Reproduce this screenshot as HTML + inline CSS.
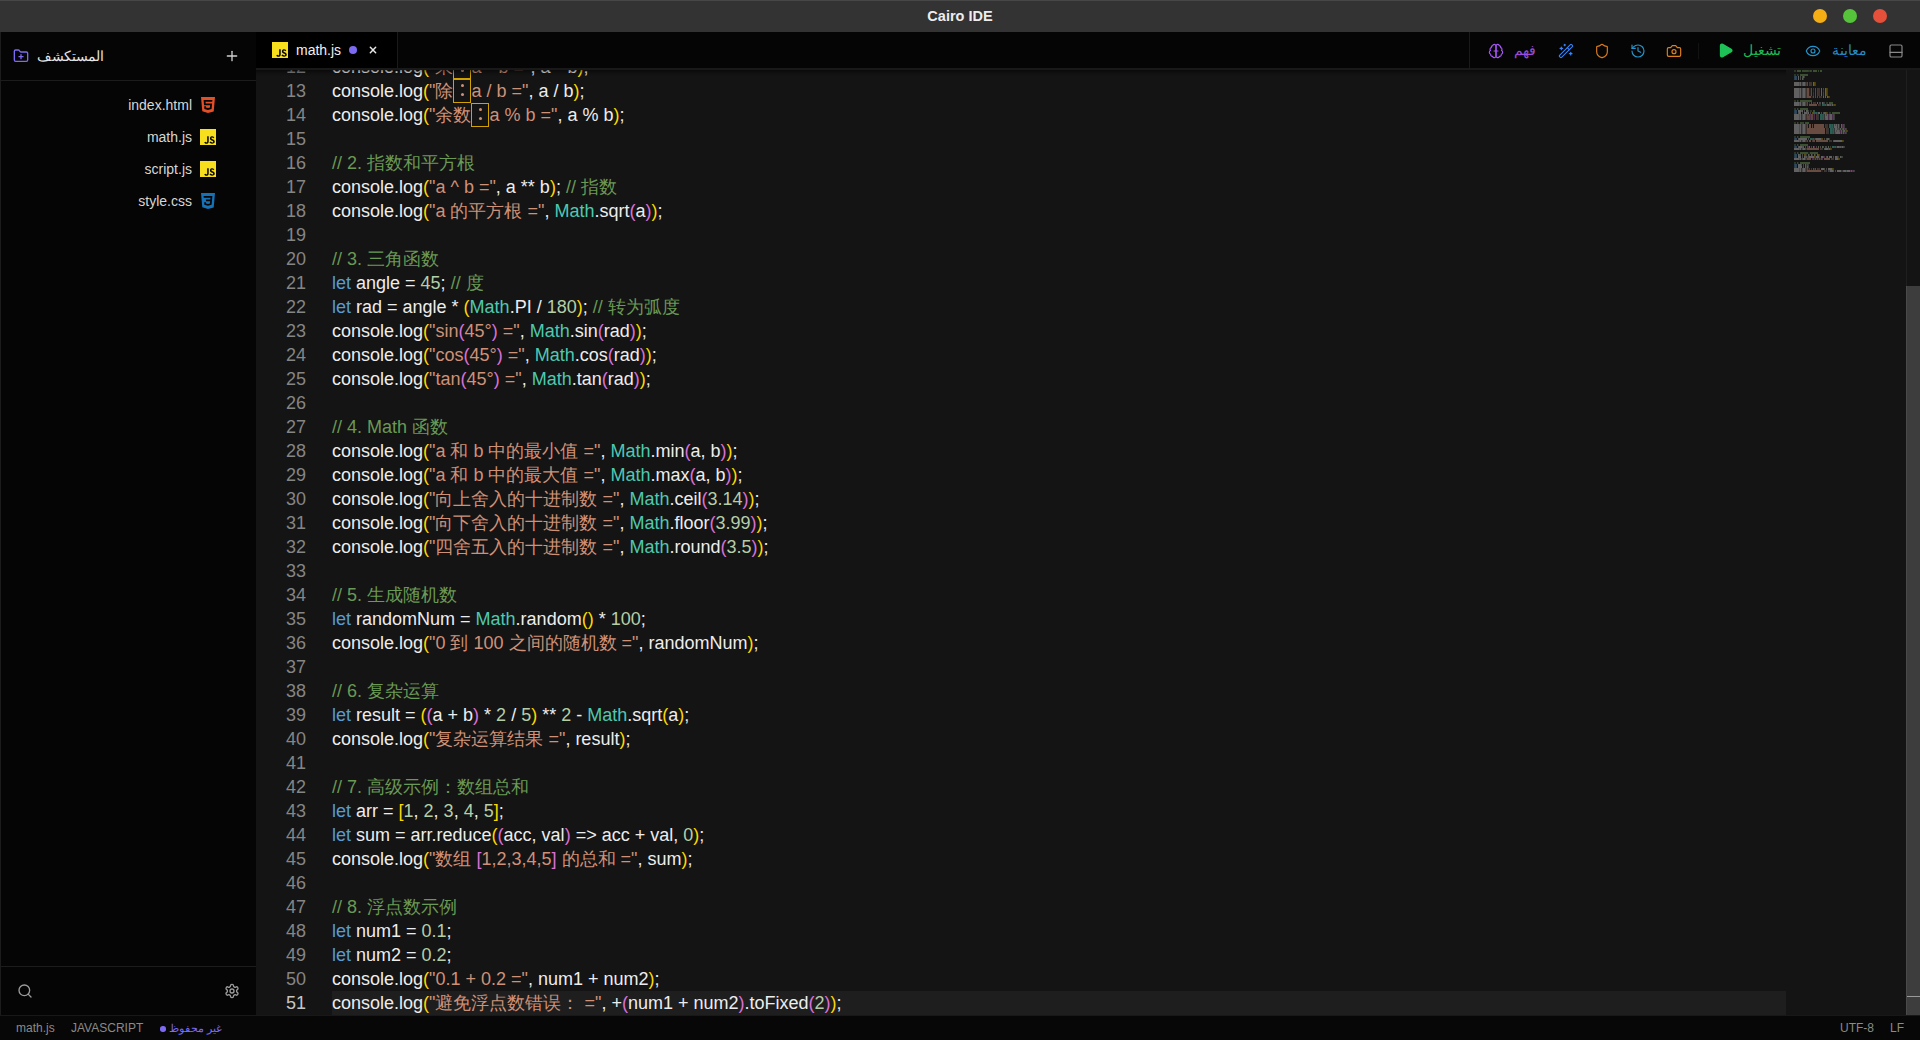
<!DOCTYPE html>
<html><head><meta charset="utf-8">
<style>
*{margin:0;padding:0;box-sizing:border-box}
html,body{width:1920px;height:1040px;overflow:hidden;background:#050505;font-family:"Liberation Sans",sans-serif}
.abs{position:absolute}
svg.i{position:absolute;width:16px;height:16px;fill:none;stroke-width:2;stroke-linecap:round;stroke-linejoin:round}
#title{left:0;top:0;width:1920px;height:32px;background:#333333;border-top:1px solid #474747}
#title .t{position:absolute;left:0;width:1920px;top:6px;text-align:center;color:#ededed;font-weight:bold;font-size:14.5px;line-height:18px}
.dot{position:absolute;top:8px;width:14px;height:14px;border-radius:50%}
#side{left:0;top:32px;width:256px;height:983px;background:#050505}
#sideborder{left:0;top:32px;width:1px;height:983px;background:#1c1c1c}
#sidehead{left:1px;top:0;width:255px;height:49px;border-bottom:1px solid #1c1c1c}
.file{position:absolute;right:64px;height:32px;line-height:32px;font-size:14px;color:#d6d6d6;text-align:right;white-space:nowrap}
#sidefoot{left:1px;top:934px;width:255px;height:49px;border-top:1px solid #1c1c1c}
#tabs{left:256px;top:32px;width:1664px;height:38px;background:#050505;border-bottom:2px solid #1a1919}
#tab{left:0;top:0;width:142px;height:36px;background:#000;border-right:1px solid #1a1a1a}
#toolbar{left:1213px;top:0;width:451px;height:36px;border-left:1px solid #1a1a1a;background:#050505}
.tb{position:absolute;font-size:14px;line-height:20px;white-space:nowrap}
#editor{left:256px;top:70px;width:1664px;height:945px;background:#141414;overflow:hidden}
#shadow{left:0;top:0;width:1530px;height:6px;box-shadow:inset 0 6px 6px -6px #000}
#code{position:absolute;left:0;top:-15px;width:1650px}
#curline{left:76px;top:921px;width:1454px;height:24px;background:#1e1e1e}
.ln{position:relative;height:24px;line-height:24px;font-size:18px;white-space:pre;color:#ededed}
.ln .n{position:absolute;left:0;width:50px;text-align:right;color:#858585}
.ln.cur .n{color:#c6c6c6}
.ln .c{position:absolute;left:76px}
.s{color:#ce9178}.cm{color:#6a9955}.k{color:#569cd6}.m{color:#4ec9b0}.nu{color:#b5cea8}
.p1{color:#ffd700}.p2{color:#da70d6}.p3{color:#179fff}
.box{position:relative;color:transparent}
.box::before{content:"";position:absolute;left:8px;top:3px;width:3px;height:3px;border-radius:50%;background:#ce9178;box-shadow:0 9px 0 #ce9178}
.box::after{content:"";position:absolute;left:0;right:0;top:-2px;bottom:-2px;border:1px solid #d1a100}
#vscroll{left:1650px;top:0;width:14px;height:945px;border-left:1px solid #1f1f1f}
#thumb{left:1650px;top:216px;width:14px;height:729px;background:#3d3d3d;border-left:1px solid #4a4a4a}
#cursorind{left:1651px;top:926px;width:13px;height:1px;background:#9a9a9a}
#status{left:0;top:1015px;width:1920px;height:25px;background:#070707;border-top:1px solid #181818;font-size:12px;color:#8a8a8a}
#status span{position:absolute;top:5px;line-height:14px;white-space:nowrap}
</style></head><body>
<div id="title" class="abs"><div class="t">Cairo IDE</div>
<div class="dot" style="left:1813px;background:#f5ae14"></div>
<div class="dot" style="left:1843px;background:#55c43b"></div>
<div class="dot" style="left:1873px;background:#e5503b"></div>
</div>

<div id="side" class="abs">
 <div id="sideborder" class="abs" style="top:0"></div>
 <div id="sidehead" class="abs"></div>
 <svg class="i" viewBox="0 0 24 24" style="left:13px;top:16px;stroke:#7c6af2"><path d="M12 10v6"/><path d="M9 13h6"/><path d="M20 20a2 2 0 0 0 2-2V8a2 2 0 0 0-2-2h-7.9a2 2 0 0 1-1.69-.9L9.6 3.9A2 2 0 0 0 7.930 3H4a2 2 0 0 0-2 2v13a2 2 0 0 0 2 2Z"/></svg>
 <div class="abs" style="left:37px;top:14px;font-size:14px;line-height:20px;color:#e6e6e6;white-space:nowrap">المستكشف</div>
 <svg class="i" viewBox="0 0 24 24" style="left:224px;top:16px;stroke:#d0d0d0"><path d="M5 12h14"/><path d="M12 5v14"/></svg>
 <div class="file" style="top:57px">index.html</div>
 <div class="file" style="top:89px">math.js</div>
 <div class="file" style="top:121px">script.js</div>
 <div class="file" style="top:153px">style.css</div>
 <svg class="abs" width="16" height="16" viewBox="0 0 24 24" style="left:200px;top:65px"><path fill-rule="evenodd" d="M1.5 0h21l-1.91 21.563L11.977 24l-8.564-2.438L1.5 0zm7.031 9.75l-.232-2.718 10.059.003.23-2.622L5.412 4.41l.698 8.01h9.126l-.326 3.426-2.91.804-2.955-.81-.188-2.11H6.248l.33 4.171L12 19.351l5.379-1.443.744-8.157H8.531z" fill="#e34f26"/></svg>
 <svg class="abs" width="16" height="16" viewBox="0 0 24 24" style="left:200px;top:97px"><path fill-rule="evenodd" d="M0 0h24v24H0V0zm22.034 18.276c-.175-1.095-.888-2.015-3.003-2.873-.736-.345-1.554-.585-1.797-1.14-.091-.33-.105-.51-.046-.705.15-.646.915-.84 1.515-.66.39.12.75.42.976.9 1.034-.676 1.034-.676 1.755-1.125-.27-.42-.404-.601-.586-.78-.63-.705-1.469-1.065-2.834-1.034l-.705.089c-.676.165-1.32.525-1.71 1.005-1.14 1.291-.811 3.541.569 4.471 1.365 1.02 3.361 1.244 3.616 2.205.24 1.17-.87 1.545-1.966 1.41-.811-.18-1.26-.586-1.755-1.336l-1.83 1.051c.21.48.45.689.81 1.109 1.74 1.756 6.09 1.666 6.871-1.004.029-.09.24-.705.074-1.65l.046.067zm-8.983-7.245h-2.248c0 1.938-.009 3.864-.009 5.805 0 1.232.063 2.363-.138 2.711-.33.689-1.18.601-1.566.48-.396-.196-.597-.466-.83-.855-.063-.105-.11-.196-.127-.196l-1.825 1.125c.305.63.75 1.172 1.324 1.517.855.51 2.004.675 3.207.405.783-.226 1.458-.691 1.811-1.411.51-.93.402-2.07.397-3.346.012-2.054 0-4.109 0-6.179l.004-.056z" fill="#f7df1e"/></svg>
 <svg class="abs" width="16" height="16" viewBox="0 0 24 24" style="left:200px;top:129px"><path fill-rule="evenodd" d="M0 0h24v24H0V0zm22.034 18.276c-.175-1.095-.888-2.015-3.003-2.873-.736-.345-1.554-.585-1.797-1.14-.091-.33-.105-.51-.046-.705.15-.646.915-.84 1.515-.66.39.12.75.42.976.9 1.034-.676 1.034-.676 1.755-1.125-.27-.42-.404-.601-.586-.78-.63-.705-1.469-1.065-2.834-1.034l-.705.089c-.676.165-1.32.525-1.71 1.005-1.14 1.291-.811 3.541.569 4.471 1.365 1.02 3.361 1.244 3.616 2.205.24 1.17-.87 1.545-1.966 1.41-.811-.18-1.26-.586-1.755-1.336l-1.83 1.051c.21.48.45.689.81 1.109 1.74 1.756 6.09 1.666 6.871-1.004.029-.09.24-.705.074-1.65l.046.067zm-8.983-7.245h-2.248c0 1.938-.009 3.864-.009 5.805 0 1.232.063 2.363-.138 2.711-.33.689-1.18.601-1.566.48-.396-.196-.597-.466-.83-.855-.063-.105-.11-.196-.127-.196l-1.825 1.125c.305.63.75 1.172 1.324 1.517.855.51 2.004.675 3.207.405.783-.226 1.458-.691 1.811-1.411.51-.93.402-2.07.397-3.346.012-2.054 0-4.109 0-6.179l.004-.056z" fill="#f7df1e"/></svg>
 <svg class="abs" width="16" height="16" viewBox="0 0 24 24" style="left:200px;top:161px"><path fill-rule="evenodd" d="M1.5 0h21l-1.91 21.563L11.977 24l-8.565-2.438L1.5 0zm17.09 4.413L5.41 4.41l.213 2.622 10.125.002-.255 2.716h-6.64l.24 2.573h6.182l-.366 3.523-2.91.804-2.956-.81-.188-2.11h-2.61l.29 3.855L12 19.288l5.373-1.53L18.59 4.414z" fill="#1572b6"/></svg>
 <div id="sidefoot" class="abs"></div>
 <svg class="i" viewBox="0 0 24 24" style="left:17px;top:951px;stroke:#9c9c9c"><circle cx="11" cy="11" r="8"/><path d="m21 21-4.3-4.3"/></svg>
 <svg class="i" viewBox="0 0 24 24" style="left:224px;top:951px;stroke:#9c9c9c"><path d="M12.22 2h-.44a2 2 0 0 0-2 2v.18a2 2 0 0 1-1 1.730l-.43.25a2 2 0 0 1-2 0l-.15-.08a2 2 0 0 0-2.73.73l-.22.38a2 2 0 0 0 .73 2.73l.15.1a2 2 0 0 1 1 1.72v.51a2 2 0 0 1-1 1.74l-.15.09a2 2 0 0 0-.73 2.73l.22.38a2 2 0 0 0 2.73.73l.15-.08a2 2 0 0 1 2 0l.43.25a2 2 0 0 1 1 1.73V20a2 2 0 0 0 2 2h.44a2 2 0 0 0 2-2v-.18a2 2 0 0 1 1-1.73l.43-.25a2 2 0 0 1 2 0l.15.08a2 2 0 0 0 2.73-.73l.22-.39a2 2 0 0 0-.73-2.73l-.15-.08a2 2 0 0 1-1-1.74v-.5a2 2 0 0 1 1-1.74l.15-.09a2 2 0 0 0 .73-2.73l-.22-.38a2 2 0 0 0-2.73-.73l-.15.08a2 2 0 0 1-2 0l-.43-.25a2 2 0 0 1-1-1.73V4a2 2 0 0 0-2-2z"/><circle cx="12" cy="12" r="3"/></svg>
</div>

<div id="tabs" class="abs">
 <div id="tab" class="abs">
  <svg class="abs" width="16" height="16" viewBox="0 0 24 24" style="left:16px;top:10px"><path fill-rule="evenodd" d="M0 0h24v24H0V0zm22.034 18.276c-.175-1.095-.888-2.015-3.003-2.873-.736-.345-1.554-.585-1.797-1.14-.091-.33-.105-.51-.046-.705.15-.646.915-.84 1.515-.66.39.12.75.42.976.9 1.034-.676 1.034-.676 1.755-1.125-.27-.42-.404-.601-.586-.78-.63-.705-1.469-1.065-2.834-1.034l-.705.089c-.676.165-1.32.525-1.71 1.005-1.14 1.291-.811 3.541.569 4.471 1.365 1.02 3.361 1.244 3.616 2.205.24 1.17-.87 1.545-1.966 1.41-.811-.18-1.26-.586-1.755-1.336l-1.83 1.051c.21.48.45.689.81 1.109 1.74 1.756 6.09 1.666 6.871-1.004.029-.09.24-.705.074-1.65l.046.067zm-8.983-7.245h-2.248c0 1.938-.009 3.864-.009 5.805 0 1.232.063 2.363-.138 2.711-.33.689-1.18.601-1.566.48-.396-.196-.597-.466-.83-.855-.063-.105-.11-.196-.127-.196l-1.825 1.125c.305.63.75 1.172 1.324 1.517.855.51 2.004.675 3.207.405.783-.226 1.458-.691 1.811-1.411.51-.93.402-2.07.397-3.346.012-2.054 0-4.109 0-6.179l.004-.056z" fill="#f7df1e"/></svg>
  <div class="tb" style="left:40px;top:8px;color:#f0f0f0">math.js</div>
  <div class="abs" style="left:93px;top:14px;width:8px;height:8px;border-radius:50%;background:#7c6af2"></div>
  <svg class="i" viewBox="0 0 24 24" style="left:109px;top:10px;stroke:#e8e8e8;stroke-width:2.2"><path d="M16 8l-8 8"/><path d="m8 8 8 8"/></svg>
 </div>
 <div id="toolbar" class="abs">
  <svg class="i" viewBox="0 0 24 24" style="left:18px;top:11px;stroke:#a855f7;stroke-width:1.75"><path d="M9.5 2A2.5 2.5 0 0 1 12 4.5v15a2.5 2.5 0 0 1-4.96.44 2.5 2.5 0 0 1-2.96-3.08 3 3 0 0 1-.34-5.58 2.5 2.5 0 0 1 1.32-4.24 2.5 2.5 0 0 1 1.98-3A2.5 2.5 0 0 1 9.5 2Z"/><path d="M14.5 2A2.5 2.5 0 0 0 12 4.5v15a2.5 2.5 0 0 0 4.96.44 2.5 2.5 0 0 0 2.96-3.08 3 3 0 0 0 .34-5.58 2.5 2.5 0 0 0-1.32-4.24 2.5 2.5 0 0 0-1.98-3A2.5 2.5 0 0 0 14.5 2Z"/><path d="M9 12h6"/></svg>
  <div class="tb" style="left:44px;top:8px;color:#9a4be0">فهم</div>
  <svg class="i" viewBox="0 0 24 24" style="left:88px;top:11px;stroke:#3b82f6;stroke-width:1.75"><path d="m21.64 3.64-1.28-1.28a1.21 1.21 0 0 0-1.72 0L2.360 18.64a1.21 1.21 0 0 0 0 1.720l1.28 1.28a1.2 1.2 0 0 0 1.72 0L21.64 5.36a1.2 1.2 0 0 0 0-1.72"/><path d="m14 7 3 3"/><path d="M5 6v4"/><path d="M19 14v4"/><path d="M10 2v2"/><path d="M7 8H3"/><path d="M21 16h-4"/><path d="M11 3H9"/></svg>
  <svg class="i" viewBox="0 0 24 24" style="left:124px;top:11px;stroke:#d97b1e;stroke-width:1.75"><path d="M20 13c0 5-3.5 7.5-7.66 8.95a1 1 0 0 1-.67-.01C7.5 20.5 4 18 4 13V6a1 1 0 0 1 1-1c2 0 4.5-1.2 6.24-2.72a1.17 1.17 0 0 1 1.52 0C14.51 3.81 17 5 19 5a1 1 0 0 1 1 1z"/></svg>
  <svg class="i" viewBox="0 0 24 24" style="left:160px;top:11px;stroke:#2394cc;stroke-width:1.75"><path d="M3 12a9 9 0 1 0 9-9 9.75 9.75 0 0 0-6.74 2.74L3 8"/><path d="M3 3v5h5"/><path d="M12 7v5l4 2"/></svg>
  <svg class="i" viewBox="0 0 24 24" style="left:196px;top:11px;stroke:#de801c;stroke-width:1.75"><path d="M14.5 4h-5L7 7H4a2 2 0 0 0-2 2v9a2 2 0 0 0 2 2h16a2 2 0 0 0 2-2V9a2 2 0 0 0-2-2h-3l-2.5-3z"/><circle cx="12" cy="13" r="3"/></svg>
  <div class="abs" style="left:228px;top:11px;width:1px;height:16px;background:#121212"></div>
  <svg class="i" viewBox="0 0 24 24" style="left:247px;top:10px;width:17px;height:17px;stroke:#1ec257;fill:#1ec257"><path d="M5 5a2 2 0 0 1 3.008-1.728l11.997 6.998a2 2 0 0 1 .003 3.458l-12 7A2 2 0 0 1 5 19z"/></svg>
  <div class="tb" style="left:273px;top:8px;color:#1db852">تشغيل</div>
  <svg class="i" viewBox="0 0 24 24" style="left:335px;top:11px;stroke:#2394cc;stroke-width:1.75"><path d="M2.062 12.348a1 1 0 0 1 0-.696 10.75 10.75 0 0 1 19.876 0 1 1 0 0 1 0 .696 10.750 10.75 0 0 1-19.876 0"/><circle cx="12" cy="12" r="3"/></svg>
  <div class="tb" style="left:362px;top:8px;color:#2689c2">معاينة</div>
  <svg class="i" viewBox="0 0 24 24" style="left:418px;top:11px;stroke:#8a8a8a;stroke-width:1.75"><rect width="18" height="18" x="3" y="3" rx="2"/><path d="M3 14h18"/></svg>
 </div>
</div>

<div id="editor" class="abs">
<div id="curline" class="abs"></div>
<div id="code">
<div class="ln"><span class="n">12</span><span class="c">console.log<span class="p1">(</span><span class="s">&quot;乘</span><span class="s box">：</span><span class="s">a * b =&quot;</span>, a * b<span class="p1">)</span>;</span></div>
<div class="ln"><span class="n">13</span><span class="c">console.log<span class="p1">(</span><span class="s">&quot;除</span><span class="s box">：</span><span class="s">a / b =&quot;</span>, a / b<span class="p1">)</span>;</span></div>
<div class="ln"><span class="n">14</span><span class="c">console.log<span class="p1">(</span><span class="s">&quot;余数</span><span class="s box">：</span><span class="s">a % b =&quot;</span>, a % b<span class="p1">)</span>;</span></div>
<div class="ln"><span class="n">15</span><span class="c"></span></div>
<div class="ln"><span class="n">16</span><span class="c"><span class="cm">// 2. 指数和平方根</span></span></div>
<div class="ln"><span class="n">17</span><span class="c">console.log<span class="p1">(</span><span class="s">&quot;a ^ b =&quot;</span>, a ** b<span class="p1">)</span>; <span class="cm">// 指数</span></span></div>
<div class="ln"><span class="n">18</span><span class="c">console.log<span class="p1">(</span><span class="s">&quot;a 的平方根 =&quot;</span>, <span class="m">Math</span>.sqrt<span class="p2">(</span>a<span class="p2">)</span><span class="p1">)</span>;</span></div>
<div class="ln"><span class="n">19</span><span class="c"></span></div>
<div class="ln"><span class="n">20</span><span class="c"><span class="cm">// 3. 三角函数</span></span></div>
<div class="ln"><span class="n">21</span><span class="c"><span class="k">let</span> angle = <span class="nu">45</span>; <span class="cm">// 度</span></span></div>
<div class="ln"><span class="n">22</span><span class="c"><span class="k">let</span> rad = angle * <span class="p1">(</span><span class="m">Math</span>.PI / <span class="nu">180</span><span class="p1">)</span>; <span class="cm">// 转为弧度</span></span></div>
<div class="ln"><span class="n">23</span><span class="c">console.log<span class="p1">(</span><span class="s">&quot;sin</span><span class="p2">(</span><span class="s">45°</span><span class="p2">)</span><span class="s"> =&quot;</span>, <span class="m">Math</span>.sin<span class="p2">(</span>rad<span class="p2">)</span><span class="p1">)</span>;</span></div>
<div class="ln"><span class="n">24</span><span class="c">console.log<span class="p1">(</span><span class="s">&quot;cos</span><span class="p2">(</span><span class="s">45°</span><span class="p2">)</span><span class="s"> =&quot;</span>, <span class="m">Math</span>.cos<span class="p2">(</span>rad<span class="p2">)</span><span class="p1">)</span>;</span></div>
<div class="ln"><span class="n">25</span><span class="c">console.log<span class="p1">(</span><span class="s">&quot;tan</span><span class="p2">(</span><span class="s">45°</span><span class="p2">)</span><span class="s"> =&quot;</span>, <span class="m">Math</span>.tan<span class="p2">(</span>rad<span class="p2">)</span><span class="p1">)</span>;</span></div>
<div class="ln"><span class="n">26</span><span class="c"></span></div>
<div class="ln"><span class="n">27</span><span class="c"><span class="cm">// 4. Math 函数</span></span></div>
<div class="ln"><span class="n">28</span><span class="c">console.log<span class="p1">(</span><span class="s">&quot;a 和 b 中的最小值 =&quot;</span>, <span class="m">Math</span>.min<span class="p2">(</span>a, b<span class="p2">)</span><span class="p1">)</span>;</span></div>
<div class="ln"><span class="n">29</span><span class="c">console.log<span class="p1">(</span><span class="s">&quot;a 和 b 中的最大值 =&quot;</span>, <span class="m">Math</span>.max<span class="p2">(</span>a, b<span class="p2">)</span><span class="p1">)</span>;</span></div>
<div class="ln"><span class="n">30</span><span class="c">console.log<span class="p1">(</span><span class="s">&quot;向上舍入的十进制数 =&quot;</span>, <span class="m">Math</span>.ceil<span class="p2">(</span><span class="nu">3.14</span><span class="p2">)</span><span class="p1">)</span>;</span></div>
<div class="ln"><span class="n">31</span><span class="c">console.log<span class="p1">(</span><span class="s">&quot;向下舍入的十进制数 =&quot;</span>, <span class="m">Math</span>.floor<span class="p2">(</span><span class="nu">3.99</span><span class="p2">)</span><span class="p1">)</span>;</span></div>
<div class="ln"><span class="n">32</span><span class="c">console.log<span class="p1">(</span><span class="s">&quot;四舍五入的十进制数 =&quot;</span>, <span class="m">Math</span>.round<span class="p2">(</span><span class="nu">3.5</span><span class="p2">)</span><span class="p1">)</span>;</span></div>
<div class="ln"><span class="n">33</span><span class="c"></span></div>
<div class="ln"><span class="n">34</span><span class="c"><span class="cm">// 5. 生成随机数</span></span></div>
<div class="ln"><span class="n">35</span><span class="c"><span class="k">let</span> randomNum = <span class="m">Math</span>.random<span class="p1">()</span> * <span class="nu">100</span>;</span></div>
<div class="ln"><span class="n">36</span><span class="c">console.log<span class="p1">(</span><span class="s">&quot;0 到 100 之间的随机数 =&quot;</span>, randomNum<span class="p1">)</span>;</span></div>
<div class="ln"><span class="n">37</span><span class="c"></span></div>
<div class="ln"><span class="n">38</span><span class="c"><span class="cm">// 6. 复杂运算</span></span></div>
<div class="ln"><span class="n">39</span><span class="c"><span class="k">let</span> result = <span class="p1">(</span><span class="p2">(</span>a + b<span class="p2">)</span> * <span class="nu">2</span> / <span class="nu">5</span><span class="p1">)</span> ** <span class="nu">2</span> - <span class="m">Math</span>.sqrt<span class="p1">(</span>a<span class="p1">)</span>;</span></div>
<div class="ln"><span class="n">40</span><span class="c">console.log<span class="p1">(</span><span class="s">&quot;复杂运算结果 =&quot;</span>, result<span class="p1">)</span>;</span></div>
<div class="ln"><span class="n">41</span><span class="c"></span></div>
<div class="ln"><span class="n">42</span><span class="c"><span class="cm">// 7. 高级示例：数组总和</span></span></div>
<div class="ln"><span class="n">43</span><span class="c"><span class="k">let</span> arr = <span class="p1">[</span><span class="nu">1</span>, <span class="nu">2</span>, <span class="nu">3</span>, <span class="nu">4</span>, <span class="nu">5</span><span class="p1">]</span>;</span></div>
<div class="ln"><span class="n">44</span><span class="c"><span class="k">let</span> sum = arr.reduce<span class="p1">(</span><span class="p2">(</span>acc, val<span class="p2">)</span> =&gt; acc + val, <span class="nu">0</span><span class="p1">)</span>;</span></div>
<div class="ln"><span class="n">45</span><span class="c">console.log<span class="p1">(</span><span class="s">&quot;数组 </span><span class="p2">[</span><span class="s">1,2,3,4,5</span><span class="p2">]</span><span class="s"> 的总和 =&quot;</span>, sum<span class="p1">)</span>;</span></div>
<div class="ln"><span class="n">46</span><span class="c"></span></div>
<div class="ln"><span class="n">47</span><span class="c"><span class="cm">// 8. 浮点数示例</span></span></div>
<div class="ln"><span class="n">48</span><span class="c"><span class="k">let</span> num1 = <span class="nu">0.1</span>;</span></div>
<div class="ln"><span class="n">49</span><span class="c"><span class="k">let</span> num2 = <span class="nu">0.2</span>;</span></div>
<div class="ln"><span class="n">50</span><span class="c">console.log<span class="p1">(</span><span class="s">&quot;0.1 + 0.2 =&quot;</span>, num1 + num2<span class="p1">)</span>;</span></div>
<div class="ln cur"><span class="n">51</span><span class="c">console.log<span class="p1">(</span><span class="s">&quot;避免浮点数错误： =&quot;</span>, +<span class="p2">(</span>num1 + num2<span class="p2">)</span>.toFixed<span class="p2">(</span><span class="nu">2</span><span class="p2">)</span><span class="p1">)</span>;</span></div>
</div>
<div id="shadow" class="abs"></div>
<svg class="abs" style="left:1538px;top:0px;opacity:.5" width="100" height="110" viewBox="0 0 100 110"><path fill="#6a9955" fill-opacity="0.55" d="M0 0h1v2h-1zM1 0h1v2h-1zM15 0h1v2h-1zM0 4h1v2h-1zM1 4h1v2h-1zM0 30h1v2h-1zM1 30h1v2h-1zM32 32h1v2h-1zM33 32h1v2h-1zM0 38h1v2h-1zM1 38h1v2h-1zM16 40h1v2h-1zM17 40h1v2h-1zM35 42h1v2h-1zM36 42h1v2h-1zM0 52h1v2h-1zM1 52h1v2h-1zM0 66h1v2h-1zM1 66h1v2h-1zM0 74h1v2h-1zM1 74h1v2h-1zM0 82h1v2h-1zM1 82h1v2h-1zM0 92h1v2h-1zM1 92h1v2h-1z"/><path fill="#6a9955" fill-opacity="0.9" d="M3 0h2v2h-2zM5 0h2v2h-2zM19 0h2v2h-2zM21 0h2v2h-2zM26 0h2v2h-2zM6 4h2v2h-2zM8 4h2v2h-2zM10 4h2v2h-2zM12 4h2v2h-2zM6 30h2v2h-2zM8 30h2v2h-2zM10 30h2v2h-2zM12 30h2v2h-2zM14 30h2v2h-2zM16 30h2v2h-2zM35 32h2v2h-2zM37 32h2v2h-2zM6 38h2v2h-2zM8 38h2v2h-2zM10 38h2v2h-2zM12 38h2v2h-2zM19 40h2v2h-2zM38 42h2v2h-2zM40 42h2v2h-2zM42 42h2v2h-2zM44 42h2v2h-2zM11 52h2v2h-2zM13 52h2v2h-2zM6 66h2v2h-2zM8 66h2v2h-2zM10 66h2v2h-2zM12 66h2v2h-2zM14 66h2v2h-2zM6 74h2v2h-2zM8 74h2v2h-2zM10 74h2v2h-2zM12 74h2v2h-2zM6 82h2v2h-2zM8 82h2v2h-2zM10 82h2v2h-2zM12 82h2v2h-2zM16 82h2v2h-2zM18 82h2v2h-2zM20 82h2v2h-2zM22 82h2v2h-2zM6 92h2v2h-2zM8 92h2v2h-2zM10 92h2v2h-2zM12 92h2v2h-2zM14 92h2v2h-2z"/><path fill="#6a9955" fill-opacity="0.8" d="M8 0h1v2h-1zM9 0h1v2h-1zM10 0h1v2h-1zM11 0h1v2h-1zM12 0h1v2h-1zM13 0h1v2h-1zM16 0h1v2h-1zM24 0h1v2h-1zM3 30h1v2h-1zM3 38h1v2h-1zM3 52h1v2h-1zM6 52h1v2h-1zM7 52h1v2h-1zM9 52h1v2h-1zM3 66h1v2h-1zM3 74h1v2h-1zM3 82h1v2h-1zM3 92h1v2h-1z"/><path fill="#6a9955" fill-opacity="0.65" d="M14 0h1v2h-1z"/><path fill="#6a9955" fill-opacity="0.7" d="M17 0h1v2h-1zM8 52h1v2h-1z"/><path fill="#6a9955" fill-opacity="0.6" d="M3 4h1v2h-1z"/><path fill="#6a9955" fill-opacity="0.35" d="M4 4h1v2h-1zM4 30h1v2h-1zM4 38h1v2h-1zM4 52h1v2h-1zM4 66h1v2h-1zM4 74h1v2h-1zM4 82h1v2h-1zM4 92h1v2h-1z"/><path fill="#569cd6" fill-opacity="0.6" d="M0 6h1v2h-1zM0 8h1v2h-1zM0 40h1v2h-1zM0 42h1v2h-1zM0 68h1v2h-1zM0 76h1v2h-1zM0 84h1v2h-1zM0 86h1v2h-1zM0 94h1v2h-1zM0 96h1v2h-1z"/><path fill="#569cd6" fill-opacity="0.8" d="M1 6h1v2h-1zM1 8h1v2h-1zM1 40h1v2h-1zM1 42h1v2h-1zM1 68h1v2h-1zM1 76h1v2h-1zM1 84h1v2h-1zM1 86h1v2h-1zM1 94h1v2h-1zM1 96h1v2h-1z"/><path fill="#569cd6" fill-opacity="0.7" d="M2 6h1v2h-1zM2 8h1v2h-1zM2 40h1v2h-1zM2 42h1v2h-1zM2 68h1v2h-1zM2 76h1v2h-1zM2 84h1v2h-1zM2 86h1v2h-1zM2 94h1v2h-1zM2 96h1v2h-1z"/><path fill="#d4d4d4" fill-opacity="0.8" d="M4 6h1v2h-1zM4 8h1v2h-1zM0 12h1v2h-1zM1 12h1v2h-1zM2 12h1v2h-1zM3 12h1v2h-1zM4 12h1v2h-1zM6 12h1v2h-1zM9 12h1v2h-1zM10 12h1v2h-1zM19 12h1v2h-1zM0 14h1v2h-1zM1 14h1v2h-1zM2 14h1v2h-1zM3 14h1v2h-1zM4 14h1v2h-1zM6 14h1v2h-1zM9 14h1v2h-1zM10 14h1v2h-1zM19 14h1v2h-1zM0 18h1v2h-1zM1 18h1v2h-1zM2 18h1v2h-1zM3 18h1v2h-1zM4 18h1v2h-1zM6 18h1v2h-1zM9 18h1v2h-1zM10 18h1v2h-1zM27 18h1v2h-1zM31 18h1v2h-1zM0 20h1v2h-1zM1 20h1v2h-1zM2 20h1v2h-1zM3 20h1v2h-1zM4 20h1v2h-1zM6 20h1v2h-1zM9 20h1v2h-1zM10 20h1v2h-1zM27 20h1v2h-1zM31 20h1v2h-1zM0 22h1v2h-1zM1 22h1v2h-1zM2 22h1v2h-1zM3 22h1v2h-1zM4 22h1v2h-1zM6 22h1v2h-1zM9 22h1v2h-1zM10 22h1v2h-1zM27 22h1v2h-1zM31 22h1v2h-1zM0 24h1v2h-1zM1 24h1v2h-1zM2 24h1v2h-1zM3 24h1v2h-1zM4 24h1v2h-1zM6 24h1v2h-1zM9 24h1v2h-1zM10 24h1v2h-1zM27 24h1v2h-1zM31 24h1v2h-1zM0 26h1v2h-1zM1 26h1v2h-1zM2 26h1v2h-1zM3 26h1v2h-1zM4 26h1v2h-1zM6 26h1v2h-1zM9 26h1v2h-1zM10 26h1v2h-1zM29 26h1v2h-1zM31 26h1v2h-1zM33 26h1v2h-1zM0 32h1v2h-1zM1 32h1v2h-1zM2 32h1v2h-1zM3 32h1v2h-1zM4 32h1v2h-1zM6 32h1v2h-1zM9 32h1v2h-1zM10 32h1v2h-1zM23 32h1v2h-1zM28 32h1v2h-1zM0 34h1v2h-1zM1 34h1v2h-1zM2 34h1v2h-1zM3 34h1v2h-1zM4 34h1v2h-1zM6 34h1v2h-1zM9 34h1v2h-1zM10 34h1v2h-1zM33 34h1v2h-1zM34 34h1v2h-1zM38 34h1v2h-1zM4 40h1v2h-1zM5 40h1v2h-1zM6 40h1v2h-1zM8 40h1v2h-1zM5 42h1v2h-1zM6 42h1v2h-1zM10 42h1v2h-1zM11 42h1v2h-1zM12 42h1v2h-1zM14 42h1v2h-1zM24 42h1v2h-1zM25 42h1v2h-1zM0 44h1v2h-1zM1 44h1v2h-1zM2 44h1v2h-1zM3 44h1v2h-1zM4 44h1v2h-1zM6 44h1v2h-1zM9 44h1v2h-1zM10 44h1v2h-1zM31 44h1v2h-1zM33 44h1v2h-1zM36 44h1v2h-1zM37 44h1v2h-1zM0 46h1v2h-1zM1 46h1v2h-1zM2 46h1v2h-1zM3 46h1v2h-1zM4 46h1v2h-1zM6 46h1v2h-1zM9 46h1v2h-1zM10 46h1v2h-1zM31 46h1v2h-1zM32 46h1v2h-1zM33 46h1v2h-1zM36 46h1v2h-1zM37 46h1v2h-1zM0 48h1v2h-1zM1 48h1v2h-1zM2 48h1v2h-1zM3 48h1v2h-1zM4 48h1v2h-1zM6 48h1v2h-1zM9 48h1v2h-1zM10 48h1v2h-1zM32 48h1v2h-1zM33 48h1v2h-1zM36 48h1v2h-1zM37 48h1v2h-1zM0 54h1v2h-1zM1 54h1v2h-1zM2 54h1v2h-1zM3 54h1v2h-1zM4 54h1v2h-1zM6 54h1v2h-1zM9 54h1v2h-1zM10 54h1v2h-1zM40 54h1v2h-1zM42 54h1v2h-1zM44 54h1v2h-1zM47 54h1v2h-1zM0 56h1v2h-1zM1 56h1v2h-1zM2 56h1v2h-1zM3 56h1v2h-1zM4 56h1v2h-1zM6 56h1v2h-1zM9 56h1v2h-1zM10 56h1v2h-1zM40 56h1v2h-1zM41 56h1v2h-1zM42 56h1v2h-1zM44 56h1v2h-1zM47 56h1v2h-1zM0 58h1v2h-1zM1 58h1v2h-1zM2 58h1v2h-1zM3 58h1v2h-1zM4 58h1v2h-1zM6 58h1v2h-1zM9 58h1v2h-1zM10 58h1v2h-1zM41 58h1v2h-1zM42 58h1v2h-1zM0 60h1v2h-1zM1 60h1v2h-1zM2 60h1v2h-1zM3 60h1v2h-1zM4 60h1v2h-1zM6 60h1v2h-1zM9 60h1v2h-1zM10 60h1v2h-1zM41 60h1v2h-1zM43 60h1v2h-1zM44 60h1v2h-1zM0 62h1v2h-1zM1 62h1v2h-1zM2 62h1v2h-1zM3 62h1v2h-1zM4 62h1v2h-1zM6 62h1v2h-1zM9 62h1v2h-1zM10 62h1v2h-1zM42 62h1v2h-1zM43 62h1v2h-1zM44 62h1v2h-1zM45 62h1v2h-1zM5 68h1v2h-1zM6 68h1v2h-1zM7 68h1v2h-1zM8 68h1v2h-1zM9 68h1v2h-1zM10 68h1v2h-1zM11 68h1v2h-1zM12 68h1v2h-1zM22 68h1v2h-1zM23 68h1v2h-1zM24 68h1v2h-1zM25 68h1v2h-1zM26 68h1v2h-1zM0 70h1v2h-1zM1 70h1v2h-1zM2 70h1v2h-1zM3 70h1v2h-1zM4 70h1v2h-1zM6 70h1v2h-1zM9 70h1v2h-1zM10 70h1v2h-1zM40 70h1v2h-1zM41 70h1v2h-1zM42 70h1v2h-1zM43 70h1v2h-1zM44 70h1v2h-1zM45 70h1v2h-1zM46 70h1v2h-1zM47 70h1v2h-1zM5 76h1v2h-1zM6 76h1v2h-1zM7 76h1v2h-1zM15 76h1v2h-1zM19 76h1v2h-1zM43 76h1v2h-1zM44 76h1v2h-1zM48 76h1v2h-1zM0 78h1v2h-1zM1 78h1v2h-1zM2 78h1v2h-1zM3 78h1v2h-1zM4 78h1v2h-1zM6 78h1v2h-1zM9 78h1v2h-1zM10 78h1v2h-1zM31 78h1v2h-1zM32 78h1v2h-1zM33 78h1v2h-1zM4 84h1v2h-1zM4 86h1v2h-1zM5 86h1v2h-1zM6 86h1v2h-1zM10 86h1v2h-1zM15 86h1v2h-1zM16 86h1v2h-1zM17 86h1v2h-1zM18 86h1v2h-1zM19 86h1v2h-1zM22 86h1v2h-1zM23 86h1v2h-1zM24 86h1v2h-1zM27 86h1v2h-1zM28 86h1v2h-1zM33 86h1v2h-1zM35 86h1v2h-1zM36 86h1v2h-1zM37 86h1v2h-1zM41 86h1v2h-1zM42 86h1v2h-1zM0 88h1v2h-1zM1 88h1v2h-1zM2 88h1v2h-1zM3 88h1v2h-1zM4 88h1v2h-1zM6 88h1v2h-1zM9 88h1v2h-1zM10 88h1v2h-1zM41 88h1v2h-1zM42 88h1v2h-1zM43 88h1v2h-1zM4 94h1v2h-1zM5 94h1v2h-1zM6 94h1v2h-1zM4 96h1v2h-1zM5 96h1v2h-1zM6 96h1v2h-1zM7 96h1v2h-1zM0 98h1v2h-1zM1 98h1v2h-1zM2 98h1v2h-1zM3 98h1v2h-1zM4 98h1v2h-1zM6 98h1v2h-1zM9 98h1v2h-1zM10 98h1v2h-1zM27 98h1v2h-1zM28 98h1v2h-1zM29 98h1v2h-1zM34 98h1v2h-1zM35 98h1v2h-1zM36 98h1v2h-1zM37 98h1v2h-1zM0 100h1v2h-1zM1 100h1v2h-1zM2 100h1v2h-1zM3 100h1v2h-1zM4 100h1v2h-1zM6 100h1v2h-1zM9 100h1v2h-1zM10 100h1v2h-1zM36 100h1v2h-1zM37 100h1v2h-1zM38 100h1v2h-1zM43 100h1v2h-1zM44 100h1v2h-1zM45 100h1v2h-1zM46 100h1v2h-1zM50 100h1v2h-1zM51 100h1v2h-1zM53 100h1v2h-1zM54 100h1v2h-1zM55 100h1v2h-1z"/><path fill="#d4d4d4" fill-opacity="0.55" d="M6 6h1v2h-1zM6 8h1v2h-1zM29 24h1v2h-1zM10 40h1v2h-1zM8 42h1v2h-1zM27 42h1v2h-1zM32 44h1v2h-1zM41 54h1v2h-1zM43 58h1v2h-1zM14 68h1v2h-1zM11 76h1v2h-1zM26 76h1v2h-1zM8 84h1v2h-1zM8 86h1v2h-1zM32 86h1v2h-1zM9 94h1v2h-1zM9 96h1v2h-1zM52 100h1v2h-1z"/><path fill="#b5cea8" fill-opacity="0.6" d="M8 6h1v2h-1zM29 42h1v2h-1zM48 58h1v2h-1zM32 68h1v2h-1zM11 84h1v2h-1zM13 94h1v2h-1z"/><path fill="#b5cea8" fill-opacity="0.8" d="M9 6h1v2h-1zM8 8h1v2h-1zM12 40h1v2h-1zM13 40h1v2h-1zM30 42h1v2h-1zM31 42h1v2h-1zM46 58h1v2h-1zM49 58h1v2h-1zM47 60h1v2h-1zM49 60h1v2h-1zM50 60h1v2h-1zM47 62h1v2h-1zM49 62h1v2h-1zM33 68h1v2h-1zM34 68h1v2h-1zM24 76h1v2h-1zM28 76h1v2h-1zM34 76h1v2h-1zM14 84h1v2h-1zM17 84h1v2h-1zM20 84h1v2h-1zM23 84h1v2h-1zM46 86h1v2h-1zM11 94h1v2h-1zM11 96h1v2h-1zM13 96h1v2h-1zM57 100h1v2h-1z"/><path fill="#d4d4d4" fill-opacity="0.4" d="M10 6h1v2h-1zM9 8h1v2h-1zM21 12h1v2h-1zM21 14h1v2h-1zM33 18h1v2h-1zM33 20h1v2h-1zM33 22h1v2h-1zM33 24h1v2h-1zM35 26h1v2h-1zM30 32h1v2h-1zM41 34h1v2h-1zM14 40h1v2h-1zM33 42h1v2h-1zM40 44h1v2h-1zM40 46h1v2h-1zM40 48h1v2h-1zM50 54h1v2h-1zM50 56h1v2h-1zM52 58h1v2h-1zM53 60h1v2h-1zM52 62h1v2h-1zM35 68h1v2h-1zM49 70h1v2h-1zM50 76h1v2h-1zM37 78h1v2h-1zM25 84h1v2h-1zM48 86h1v2h-1zM45 88h1v2h-1zM14 94h1v2h-1zM14 96h1v2h-1zM39 98h1v2h-1zM60 100h1v2h-1z"/><path fill="#d4d4d4" fill-opacity="0.6" d="M5 12h1v2h-1zM8 12h1v2h-1zM5 14h1v2h-1zM8 14h1v2h-1zM5 18h1v2h-1zM8 18h1v2h-1zM5 20h1v2h-1zM8 20h1v2h-1zM5 22h1v2h-1zM8 22h1v2h-1zM5 24h1v2h-1zM8 24h1v2h-1zM5 26h1v2h-1zM8 26h1v2h-1zM5 32h1v2h-1zM8 32h1v2h-1zM5 34h1v2h-1zM8 34h1v2h-1zM7 40h1v2h-1zM13 42h1v2h-1zM5 44h1v2h-1zM8 44h1v2h-1zM5 46h1v2h-1zM8 46h1v2h-1zM5 48h1v2h-1zM8 48h1v2h-1zM5 54h1v2h-1zM8 54h1v2h-1zM5 56h1v2h-1zM8 56h1v2h-1zM5 58h1v2h-1zM8 58h1v2h-1zM44 58h1v2h-1zM5 60h1v2h-1zM8 60h1v2h-1zM42 60h1v2h-1zM5 62h1v2h-1zM8 62h1v2h-1zM5 70h1v2h-1zM8 70h1v2h-1zM8 76h1v2h-1zM5 78h1v2h-1zM8 78h1v2h-1zM34 78h1v2h-1zM29 86h1v2h-1zM43 86h1v2h-1zM5 88h1v2h-1zM8 88h1v2h-1zM7 94h1v2h-1zM5 98h1v2h-1zM8 98h1v2h-1zM30 98h1v2h-1zM5 100h1v2h-1zM8 100h1v2h-1zM39 100h1v2h-1z"/><path fill="#d4d4d4" fill-opacity="0.35" d="M7 12h1v2h-1zM17 12h1v2h-1zM7 14h1v2h-1zM17 14h1v2h-1zM7 18h1v2h-1zM25 18h1v2h-1zM7 20h1v2h-1zM25 20h1v2h-1zM29 20h1v2h-1zM7 22h1v2h-1zM25 22h1v2h-1zM7 24h1v2h-1zM25 24h1v2h-1zM7 26h1v2h-1zM27 26h1v2h-1zM7 32h1v2h-1zM21 32h1v2h-1zM7 34h1v2h-1zM26 34h1v2h-1zM32 34h1v2h-1zM23 42h1v2h-1zM7 44h1v2h-1zM24 44h1v2h-1zM30 44h1v2h-1zM7 46h1v2h-1zM24 46h1v2h-1zM30 46h1v2h-1zM7 48h1v2h-1zM24 48h1v2h-1zM30 48h1v2h-1zM7 54h1v2h-1zM33 54h1v2h-1zM39 54h1v2h-1zM45 54h1v2h-1zM7 56h1v2h-1zM33 56h1v2h-1zM39 56h1v2h-1zM45 56h1v2h-1zM7 58h1v2h-1zM34 58h1v2h-1zM40 58h1v2h-1zM7 60h1v2h-1zM34 60h1v2h-1zM40 60h1v2h-1zM7 62h1v2h-1zM34 62h1v2h-1zM40 62h1v2h-1zM20 68h1v2h-1zM7 70h1v2h-1zM37 70h1v2h-1zM36 76h1v2h-1zM42 76h1v2h-1zM7 78h1v2h-1zM28 78h1v2h-1zM12 84h1v2h-1zM15 84h1v2h-1zM18 84h1v2h-1zM21 84h1v2h-1zM13 86h1v2h-1zM25 86h1v2h-1zM44 86h1v2h-1zM7 88h1v2h-1zM39 88h1v2h-1zM7 98h1v2h-1zM25 98h1v2h-1zM7 100h1v2h-1zM32 100h1v2h-1zM48 100h1v2h-1z"/><path fill="#ffd700" fill-opacity="0.55" d="M11 12h1v2h-1zM20 12h1v2h-1zM11 14h1v2h-1zM20 14h1v2h-1zM11 18h1v2h-1zM32 18h1v2h-1zM11 20h1v2h-1zM32 20h1v2h-1zM11 22h1v2h-1zM32 22h1v2h-1zM11 24h1v2h-1zM32 24h1v2h-1zM11 26h1v2h-1zM34 26h1v2h-1zM11 32h1v2h-1zM29 32h1v2h-1zM11 34h1v2h-1zM40 34h1v2h-1zM18 42h1v2h-1zM32 42h1v2h-1zM11 44h1v2h-1zM39 44h1v2h-1zM11 46h1v2h-1zM39 46h1v2h-1zM11 48h1v2h-1zM39 48h1v2h-1zM11 54h1v2h-1zM49 54h1v2h-1zM11 56h1v2h-1zM49 56h1v2h-1zM11 58h1v2h-1zM51 58h1v2h-1zM11 60h1v2h-1zM52 60h1v2h-1zM11 62h1v2h-1zM51 62h1v2h-1zM27 68h1v2h-1zM28 68h1v2h-1zM11 70h1v2h-1zM48 70h1v2h-1zM13 76h1v2h-1zM29 76h1v2h-1zM47 76h1v2h-1zM49 76h1v2h-1zM11 78h1v2h-1zM36 78h1v2h-1zM20 86h1v2h-1zM47 86h1v2h-1zM11 88h1v2h-1zM44 88h1v2h-1zM11 98h1v2h-1zM38 98h1v2h-1zM11 100h1v2h-1zM59 100h1v2h-1z"/><path fill="#ce9178" fill-opacity="0.45" d="M12 12h1v2h-1zM16 12h1v2h-1zM12 14h1v2h-1zM16 14h1v2h-1zM12 18h1v2h-1zM24 18h1v2h-1zM12 20h1v2h-1zM24 20h1v2h-1zM12 22h1v2h-1zM24 22h1v2h-1zM12 24h1v2h-1zM24 24h1v2h-1zM12 26h1v2h-1zM26 26h1v2h-1zM12 32h1v2h-1zM20 32h1v2h-1zM12 34h1v2h-1zM25 34h1v2h-1zM12 44h1v2h-1zM23 44h1v2h-1zM12 46h1v2h-1zM23 46h1v2h-1zM12 48h1v2h-1zM23 48h1v2h-1zM12 54h1v2h-1zM32 54h1v2h-1zM12 56h1v2h-1zM32 56h1v2h-1zM12 58h1v2h-1zM33 58h1v2h-1zM12 60h1v2h-1zM33 60h1v2h-1zM12 62h1v2h-1zM33 62h1v2h-1zM12 70h1v2h-1zM36 70h1v2h-1zM12 78h1v2h-1zM27 78h1v2h-1zM12 88h1v2h-1zM38 88h1v2h-1zM12 98h1v2h-1zM24 98h1v2h-1zM12 100h1v2h-1zM31 100h1v2h-1z"/><path fill="#ce9178" fill-opacity="0.8" d="M13 12h1v2h-1zM13 14h1v2h-1zM17 18h1v2h-1zM21 18h1v2h-1zM17 20h1v2h-1zM21 20h1v2h-1zM17 22h1v2h-1zM21 22h1v2h-1zM17 24h1v2h-1zM21 24h1v2h-1zM19 26h1v2h-1zM21 26h1v2h-1zM23 26h1v2h-1zM13 32h1v2h-1zM17 32h1v2h-1zM13 34h1v2h-1zM13 44h1v2h-1zM15 44h1v2h-1zM17 44h1v2h-1zM18 44h1v2h-1zM13 46h1v2h-1zM14 46h1v2h-1zM15 46h1v2h-1zM17 46h1v2h-1zM18 46h1v2h-1zM14 48h1v2h-1zM15 48h1v2h-1zM17 48h1v2h-1zM18 48h1v2h-1zM13 54h1v2h-1zM18 54h1v2h-1zM13 56h1v2h-1zM18 56h1v2h-1zM13 70h1v2h-1zM19 70h1v2h-1zM20 70h1v2h-1zM21 88h1v2h-1zM23 88h1v2h-1zM25 88h1v2h-1zM27 88h1v2h-1zM13 98h1v2h-1zM19 98h1v2h-1zM21 98h1v2h-1z"/><path fill="#ce9178" fill-opacity="0.55" d="M15 12h1v2h-1zM15 14h1v2h-1zM23 18h1v2h-1zM23 20h1v2h-1zM23 22h1v2h-1zM19 24h1v2h-1zM23 24h1v2h-1zM25 26h1v2h-1zM19 32h1v2h-1zM24 34h1v2h-1zM14 44h1v2h-1zM22 44h1v2h-1zM22 46h1v2h-1zM22 48h1v2h-1zM31 54h1v2h-1zM31 56h1v2h-1zM32 58h1v2h-1zM32 60h1v2h-1zM32 62h1v2h-1zM35 70h1v2h-1zM26 78h1v2h-1zM37 88h1v2h-1zM23 98h1v2h-1zM30 100h1v2h-1z"/><path fill="#ce9178" fill-opacity="0.9" d="M13 18h2v2h-2zM13 20h2v2h-2zM13 22h2v2h-2zM13 24h2v2h-2zM13 26h2v2h-2zM15 26h2v2h-2zM15 34h2v2h-2zM17 34h2v2h-2zM19 34h2v2h-2zM21 34h2v2h-2zM15 54h2v2h-2zM20 54h2v2h-2zM22 54h2v2h-2zM24 54h2v2h-2zM26 54h2v2h-2zM28 54h2v2h-2zM15 56h2v2h-2zM20 56h2v2h-2zM22 56h2v2h-2zM24 56h2v2h-2zM26 56h2v2h-2zM28 56h2v2h-2zM13 58h2v2h-2zM15 58h2v2h-2zM17 58h2v2h-2zM19 58h2v2h-2zM21 58h2v2h-2zM23 58h2v2h-2zM25 58h2v2h-2zM27 58h2v2h-2zM29 58h2v2h-2zM13 60h2v2h-2zM15 60h2v2h-2zM17 60h2v2h-2zM19 60h2v2h-2zM21 60h2v2h-2zM23 60h2v2h-2zM25 60h2v2h-2zM27 60h2v2h-2zM29 60h2v2h-2zM13 62h2v2h-2zM15 62h2v2h-2zM17 62h2v2h-2zM19 62h2v2h-2zM21 62h2v2h-2zM23 62h2v2h-2zM25 62h2v2h-2zM27 62h2v2h-2zM29 62h2v2h-2zM15 70h2v2h-2zM22 70h2v2h-2zM24 70h2v2h-2zM26 70h2v2h-2zM28 70h2v2h-2zM30 70h2v2h-2zM32 70h2v2h-2zM13 78h2v2h-2zM15 78h2v2h-2zM17 78h2v2h-2zM19 78h2v2h-2zM21 78h2v2h-2zM23 78h2v2h-2zM13 88h2v2h-2zM15 88h2v2h-2zM30 88h2v2h-2zM32 88h2v2h-2zM34 88h2v2h-2zM13 100h2v2h-2zM15 100h2v2h-2zM17 100h2v2h-2zM19 100h2v2h-2zM21 100h2v2h-2zM23 100h2v2h-2zM25 100h2v2h-2z"/><path fill="#ce9178" fill-opacity="0.25" d="M15 18h2v2h-2zM15 20h2v2h-2zM15 22h2v2h-2zM15 24h2v2h-2zM17 26h2v2h-2zM27 100h2v2h-2z"/><path fill="#ce9178" fill-opacity="0.5" d="M19 18h1v2h-1zM19 22h1v2h-1zM17 98h1v2h-1z"/><path fill="#d4d4d4" fill-opacity="0.5" d="M29 18h1v2h-1zM29 22h1v2h-1zM25 32h1v2h-1zM26 32h1v2h-1zM16 42h1v2h-1zM30 68h1v2h-1zM17 76h1v2h-1zM22 76h1v2h-1zM31 76h1v2h-1zM32 76h1v2h-1zM39 86h1v2h-1zM32 98h1v2h-1zM34 100h1v2h-1zM41 100h1v2h-1z"/><path fill="#ce9178" fill-opacity="0.35" d="M19 20h1v2h-1zM15 32h1v2h-1zM20 88h1v2h-1zM22 88h1v2h-1zM24 88h1v2h-1zM26 88h1v2h-1zM14 98h1v2h-1zM20 98h1v2h-1z"/><path fill="#4ec9b0" fill-opacity="0.8" d="M28 34h1v2h-1zM29 34h1v2h-1zM31 34h1v2h-1zM19 42h1v2h-1zM20 42h1v2h-1zM22 42h1v2h-1zM26 44h1v2h-1zM27 44h1v2h-1zM29 44h1v2h-1zM26 46h1v2h-1zM27 46h1v2h-1zM29 46h1v2h-1zM26 48h1v2h-1zM27 48h1v2h-1zM29 48h1v2h-1zM35 54h1v2h-1zM36 54h1v2h-1zM38 54h1v2h-1zM35 56h1v2h-1zM36 56h1v2h-1zM38 56h1v2h-1zM36 58h1v2h-1zM37 58h1v2h-1zM39 58h1v2h-1zM36 60h1v2h-1zM37 60h1v2h-1zM39 60h1v2h-1zM36 62h1v2h-1zM37 62h1v2h-1zM39 62h1v2h-1zM16 68h1v2h-1zM17 68h1v2h-1zM19 68h1v2h-1zM38 76h1v2h-1zM39 76h1v2h-1zM41 76h1v2h-1z"/><path fill="#4ec9b0" fill-opacity="0.7" d="M30 34h1v2h-1zM21 42h1v2h-1zM28 44h1v2h-1zM28 46h1v2h-1zM28 48h1v2h-1zM37 54h1v2h-1zM37 56h1v2h-1zM38 58h1v2h-1zM38 60h1v2h-1zM38 62h1v2h-1zM18 68h1v2h-1zM40 76h1v2h-1z"/><path fill="#d4d4d4" fill-opacity="0.65" d="M35 34h1v2h-1zM4 42h1v2h-1zM35 44h1v2h-1zM35 46h1v2h-1zM35 48h1v2h-1zM45 60h1v2h-1zM41 62h1v2h-1zM4 68h1v2h-1zM21 68h1v2h-1zM39 70h1v2h-1zM4 76h1v2h-1zM45 76h1v2h-1zM30 78h1v2h-1zM5 84h1v2h-1zM6 84h1v2h-1zM11 86h1v2h-1zM12 86h1v2h-1zM14 86h1v2h-1z"/><path fill="#d4d4d4" fill-opacity="0.7" d="M36 34h1v2h-1zM31 48h1v2h-1zM9 76h1v2h-1zM46 76h1v2h-1zM35 78h1v2h-1zM49 100h1v2h-1z"/><path fill="#da70d6" fill-opacity="0.55" d="M37 34h1v2h-1zM39 34h1v2h-1zM16 44h1v2h-1zM20 44h1v2h-1zM34 44h1v2h-1zM38 44h1v2h-1zM16 46h1v2h-1zM20 46h1v2h-1zM34 46h1v2h-1zM38 46h1v2h-1zM16 48h1v2h-1zM20 48h1v2h-1zM34 48h1v2h-1zM38 48h1v2h-1zM43 54h1v2h-1zM48 54h1v2h-1zM43 56h1v2h-1zM48 56h1v2h-1zM45 58h1v2h-1zM50 58h1v2h-1zM46 60h1v2h-1zM51 60h1v2h-1zM46 62h1v2h-1zM50 62h1v2h-1zM14 76h1v2h-1zM20 76h1v2h-1zM21 86h1v2h-1zM30 86h1v2h-1zM35 100h1v2h-1zM47 100h1v2h-1zM56 100h1v2h-1zM58 100h1v2h-1z"/><path fill="#ce9178" fill-opacity="0.3" d="M19 44h1v2h-1zM19 46h1v2h-1zM19 48h1v2h-1z"/><path fill="#ce9178" fill-opacity="0.7" d="M13 48h1v2h-1z"/><path fill="#b5cea8" fill-opacity="0.35" d="M47 58h1v2h-1zM48 60h1v2h-1zM48 62h1v2h-1zM12 94h1v2h-1zM12 96h1v2h-1z"/><path fill="#ce9178" fill-opacity="0.6" d="M18 70h1v2h-1zM19 88h1v2h-1zM15 98h1v2h-1z"/><path fill="#6a9955" fill-opacity="0.25" d="M14 82h2v2h-2z"/><path fill="#ffd700" fill-opacity="0.6" d="M10 84h1v2h-1zM24 84h1v2h-1z"/><path fill="#da70d6" fill-opacity="0.6" d="M18 88h1v2h-1zM28 88h1v2h-1z"/></svg>
<div id="vscroll" class="abs"></div>
<div id="thumb" class="abs"></div>
<div id="cursorind" class="abs"></div>
</div>

<div id="status" class="abs">
 <span style="left:16px">math.js</span>
 <span style="left:71px">JAVASCRIPT</span>
 <span style="left:160px;top:10px;width:5.5px;height:5.5px;border-radius:50%;background:#7c6af2"></span>
 <span style="left:169px;color:#7c6af2;font-size:11px">غير محفوظ</span>
 <span style="left:1840px">UTF-8</span>
 <span style="left:1890px">LF</span>
</div>
</body></html>
